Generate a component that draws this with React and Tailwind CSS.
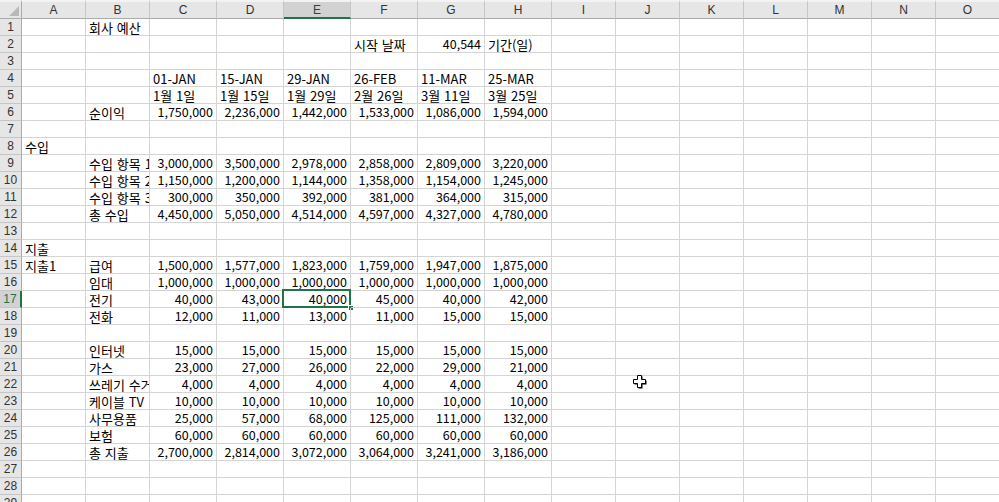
import React from 'react';

const COLS = ['A', 'B', 'C', 'D', 'E', 'F', 'G', 'H', 'I', 'J', 'K', 'L', 'M', 'N', 'O'];

// each row: { a, b, c: [values C..H], t: 'num' | 'text' }
const rows = {
  1: { b: '회사 예산' },
  2: { cells: { F: ['시작 날짜', 'l'], G: ['40,544', 'r'], H: ['기간(일)', 'l'] } },
  4: { text: ['01-JAN', '15-JAN', '29-JAN', '26-FEB', '11-MAR', '25-MAR'] },
  5: { text: ['1월 1일', '1월 15일', '1월 29일', '2월 26일', '3월 11일', '3월 25일'] },
  6: { b: '순이익', nums: ['1,750,000', '2,236,000', '1,442,000', '1,533,000', '1,086,000', '1,594,000'] },
  8: { a: '수입' },
  9: { b: '수입 항목 1', nums: ['3,000,000', '3,500,000', '2,978,000', '2,858,000', '2,809,000', '3,220,000'] },
  10: { b: '수입 항목 2', nums: ['1,150,000', '1,200,000', '1,144,000', '1,358,000', '1,154,000', '1,245,000'] },
  11: { b: '수입 항목 3', nums: ['300,000', '350,000', '392,000', '381,000', '364,000', '315,000'] },
  12: { b: '총 수입', nums: ['4,450,000', '5,050,000', '4,514,000', '4,597,000', '4,327,000', '4,780,000'] },
  14: { a: '지출' },
  15: { a: '지출1', b: '급여', nums: ['1,500,000', '1,577,000', '1,823,000', '1,759,000', '1,947,000', '1,875,000'] },
  16: { b: '임대', nums: ['1,000,000', '1,000,000', '1,000,000', '1,000,000', '1,000,000', '1,000,000'] },
  17: { b: '전기', nums: ['40,000', '43,000', '40,000', '45,000', '40,000', '42,000'] },
  18: { b: '전화', nums: ['12,000', '11,000', '13,000', '11,000', '15,000', '15,000'] },
  20: { b: '인터넷', nums: ['15,000', '15,000', '15,000', '15,000', '15,000', '15,000'] },
  21: { b: '가스', nums: ['23,000', '27,000', '26,000', '22,000', '29,000', '21,000'] },
  22: { b: '쓰레기 수거', nums: ['4,000', '4,000', '4,000', '4,000', '4,000', '4,000'] },
  23: { b: '케이블 TV', nums: ['10,000', '10,000', '10,000', '10,000', '10,000', '10,000'] },
  24: { b: '사무용품', nums: ['25,000', '57,000', '68,000', '125,000', '111,000', '132,000'] },
  25: { b: '보험', nums: ['60,000', '60,000', '60,000', '60,000', '60,000', '60,000'] },
  26: { b: '총 지출', nums: ['2,700,000', '2,814,000', '3,072,000', '3,064,000', '3,241,000', '3,186,000'] },
};

const getCell = (r, col) => {
  const row = rows[r];
  if (!row) return null;
  if (col === 'A' && row.a) return [row.a, 'l'];
  if (col === 'B' && row.b) return [row.b, 'l'];
  if (row.cells && row.cells[col]) return row.cells[col];
  const idx = 'CDEFGH'.indexOf(col);
  if (idx >= 0) {
    if (row.nums) return [row.nums[idx], 'r'];
    if (row.text) return [row.text[idx], 'l'];
  }
  return null;
};

const SEL_COL = 'E';
const SEL_ROW = 17;

const Cursor = () => (
  <svg width="18" height="18" viewBox="0 0 18 18" className="absolute left-[631px] top-[373px]">
    <path d="M6.5 2.5h4v4h4v4h-4v4h-4v-4h-4v-4h4z" fill="#000" transform="translate(1 1)" />
    <path d="M6.5 2.5h4v4h4v4h-4v4h-4v-4h-4v-4h4z" fill="#fff" stroke="#000" strokeWidth="1" />
  </svg>
);

export default function App() {
  const rowNums = Array.from({ length: 29 }, (_, i) => i + 1);

  return (
    <div className="relative w-[999px] h-[502px] overflow-hidden bg-white text-black" style={{ fontFamily: '"Noto Sans CJK KR", "Noto Sans", sans-serif' }}>
      <div className="grid grid-cols-[22px_64px_64px_repeat(6,67px)_repeat(7,64px)] grid-rows-[19px] auto-rows-[17px] w-[1000px]">
        {/* header row */}
        <div className="relative bg-[#e6e6e6] border-r border-b border-[#ababab] border-t-2 border-t-[#f3f3f3]">
          <svg width="10" height="10" viewBox="0 0 10 10" className="absolute right-[2px] bottom-[2px]">
            <path d="M10 0 L10 10 L0 10 Z" fill="#b9b9b9" />
          </svg>
        </div>
        {COLS.map((c) => (
          <div
            key={c}
            className={
              c === SEL_COL
                ? 'flex items-center justify-center bg-[#d2d2d2] border-r border-[#c6c6c6] border-b-2 border-b-[#217346] border-t-2 border-t-[#f3f3f3] text-[12px] text-[#1e4e33] font-["Liberation_Sans"]'
                : 'flex items-center justify-center bg-[#e6e6e6] border-r border-[#c6c6c6] border-b border-b-[#ababab] border-t-2 border-t-[#f3f3f3] text-[12px] text-[#333] font-["Liberation_Sans"]'
            }
          >
            {c}
          </div>
        ))}

        {rowNums.map((r) => (
          <React.Fragment key={r}>
            <div
              className={
                r === SEL_ROW
                  ? 'flex items-center justify-center bg-[#d2d2d2] border-r-2 border-r-[#217346] border-b border-b-[#c6c6c6] text-[12px] text-[#217346] font-["Liberation_Sans"]'
                  : 'flex items-center justify-center bg-[#e6e6e6] border-r border-r-[#ababab] border-b border-b-[#c6c6c6] text-[12px] text-[#333] font-["Liberation_Sans"]'
              }
            >
              {r}
            </div>
            {COLS.map((c) => {
              const cell = getCell(r, c);
              const selected = r === SEL_ROW && c === SEL_COL;
              const isNum = cell && cell[1] === 'r';
              return (
                <div
                  key={c}
                  className={
                    'relative flex items-center whitespace-nowrap border-r border-b border-[#d4d4d4] leading-none ' +
                    (isNum ? 'justify-end pr-[3px] text-[12.5px]' : 'justify-start pl-[3px] text-[13px] [word-spacing:1px]') +
                    (selected ? '' : ' overflow-hidden')
                  }
                >
                  {cell ? <span className="pt-[1px]">{cell[0]}</span> : null}
                  {selected && (
                    <>
                      <div className="absolute -left-[2px] -top-[2px] w-[69px] h-[19px] border-2 border-[#217346]" />
                      <div className="absolute -right-[4px] -bottom-[4px] w-[6px] h-[6px] bg-[#217346] border border-white" />
                    </>
                  )}
                </div>
              );
            })}
          </React.Fragment>
        ))}
      </div>
      <Cursor />
    </div>
  );
}
